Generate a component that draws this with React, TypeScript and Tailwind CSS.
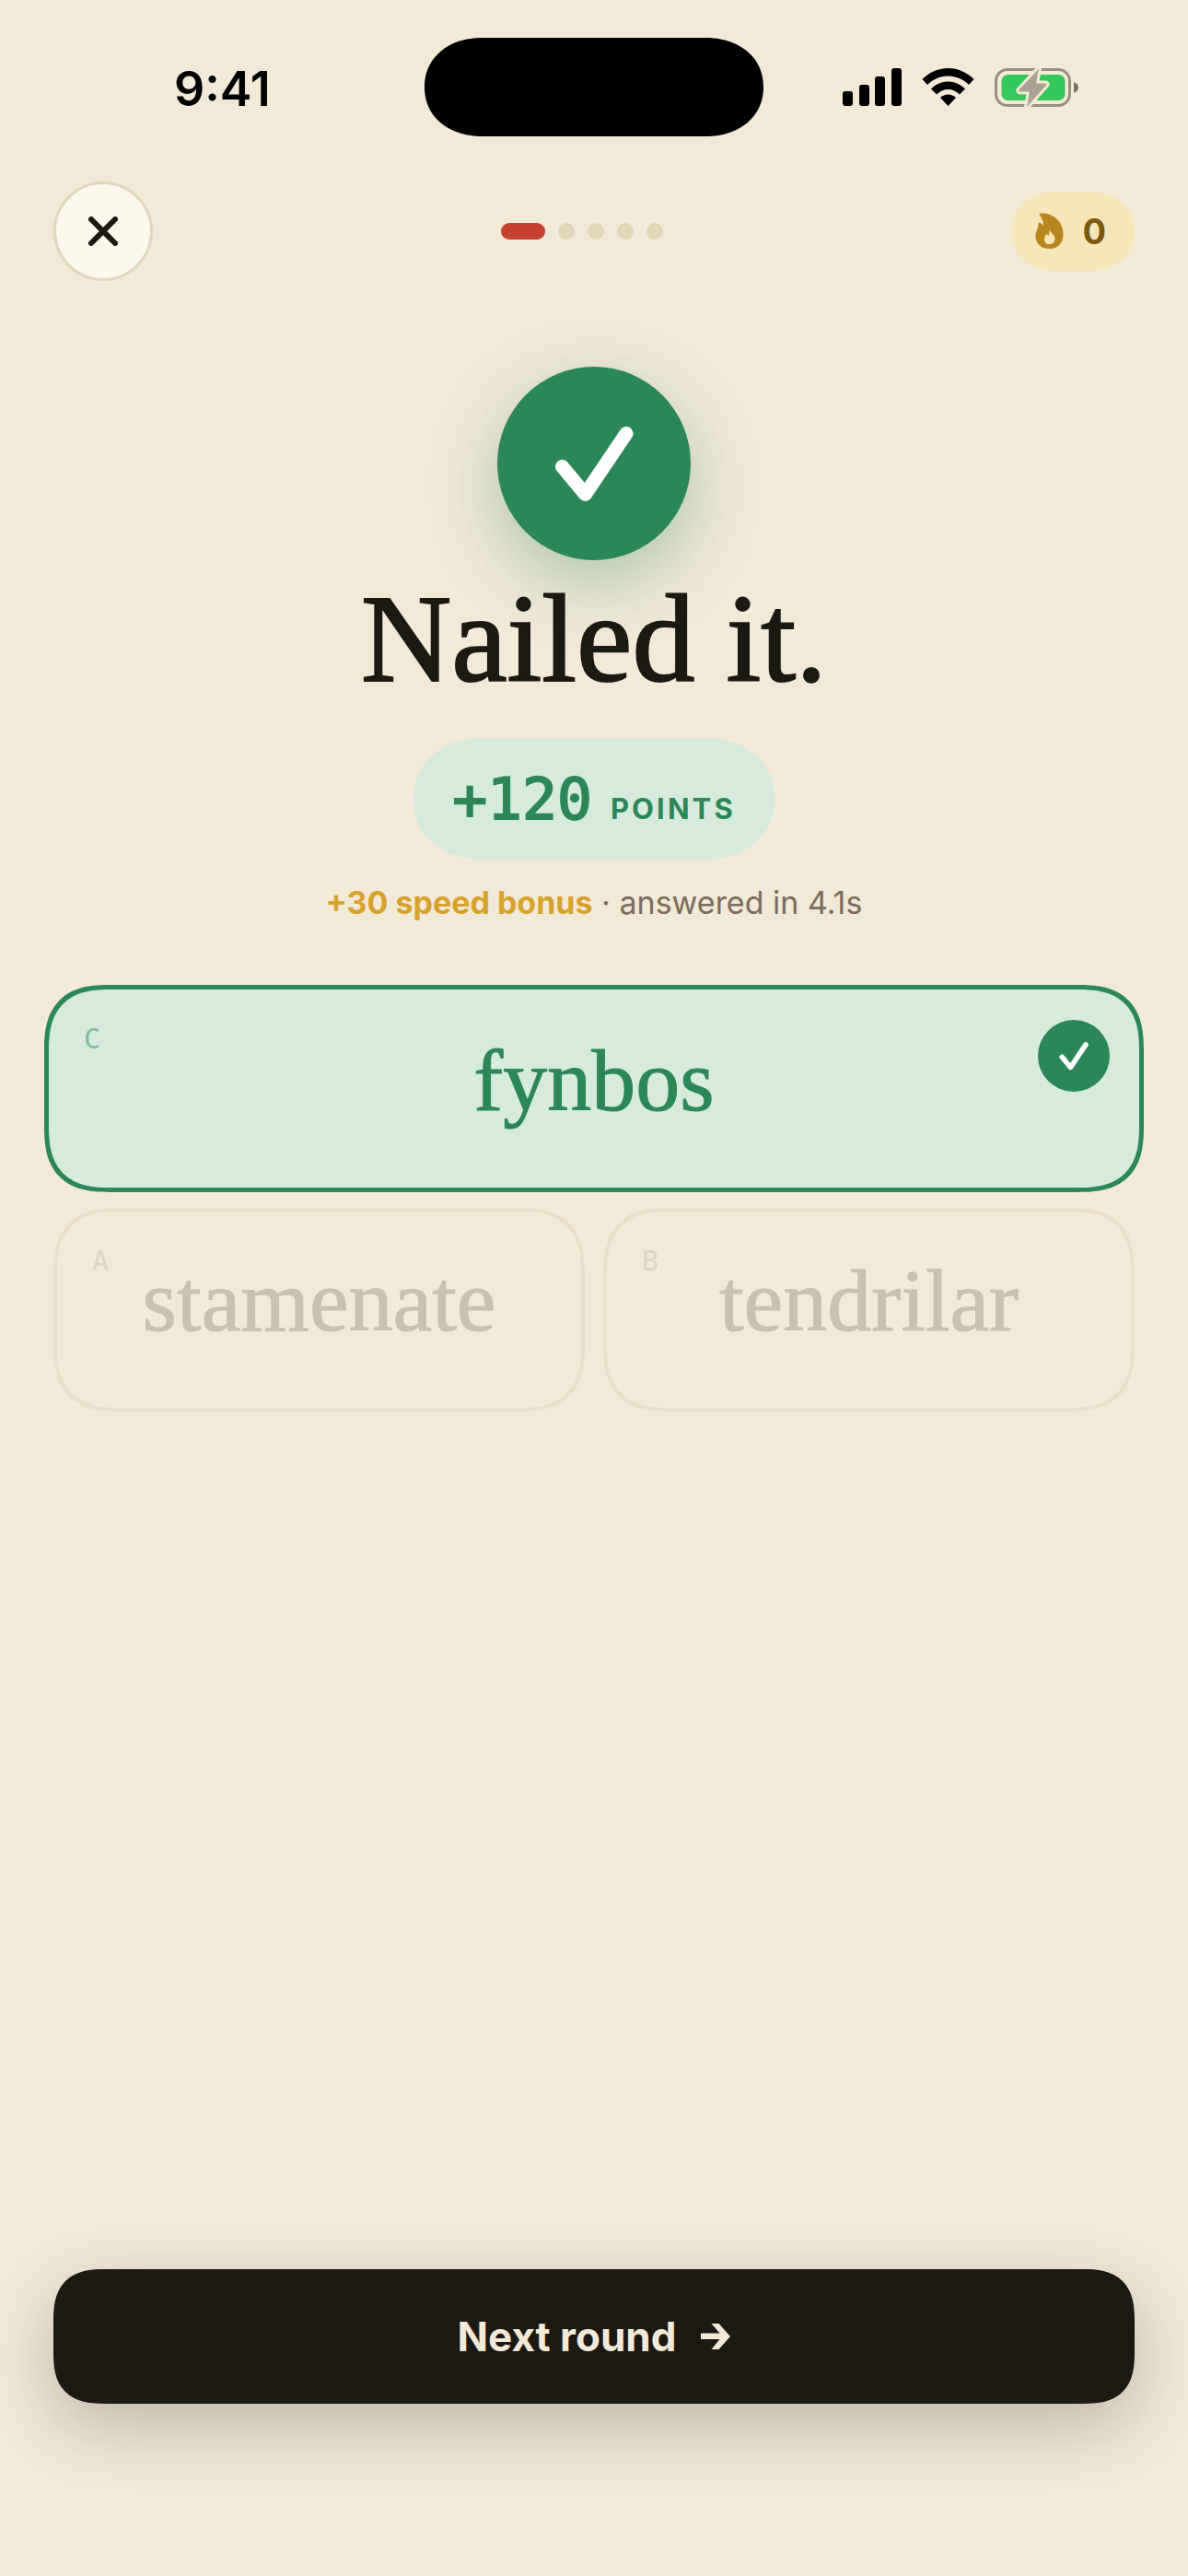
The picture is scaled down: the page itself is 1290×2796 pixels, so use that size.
type AnswerState = "correct" | "dimmed";

type Answer = {
  letter: string;
  word: string;
};

const otherAnswers: Answer[] = [
  { letter: "A", word: "stamenate" },
  { letter: "B", word: "tendrilar" },
];

const TOTAL_ROUNDS = 5;
const CURRENT_ROUND = 0;

function StatusBar() {
  return (
    <div className="grid grid-cols-[1fr_368px_1fr] items-center pt-[41px]">
      <div className="pt-1 pl-[189px] text-[52px] leading-[60px] font-semibold text-black">9:41</div>
      <div className="h-[107px] rounded-[64px/54px] bg-black [corner-shape:superellipse(1.1)]" />
      <div className="flex items-center justify-end gap-[22px] pr-[118px]">
        {/* Signal */}
        <svg width="64" height="42" viewBox="0 0 64 42" aria-hidden="true">
          <rect x="0" y="25" width="11" height="16" rx="3" />
          <rect x="18" y="18" width="11" height="23" rx="3" />
          <rect x="35" y="9" width="11" height="32" rx="3" />
          <rect x="53" y="0" width="11" height="41" rx="3" />
        </svg>
        {/* Wifi */}
        <svg width="57" height="42" viewBox="0 0 57 42" aria-hidden="true">
          <path d="M28.500 0C39 0 49 4.500 56.500 12L51 18C45 12 37 8.500 28.500 8.500S12 12 6 18L.5 12C8 4.500 18 0 28.500 0Z" />
          <path d="M28.500 14.500C35.500 14.500 42 17.500 47 22.500L41 28.500C37.500 25 33 23 28.500 23S19.500 25 16 28.500L10 22.500C15 17.500 21.500 14.500 28.500 14.500Z" />
          <path d="M28.500 28.500C31.500 28.500 34.500 29.700 37 32L28.500 41L20 32C22.500 29.700 25.500 28.500 28.500 28.500Z" />
        </svg>
        {/* Battery */}
        <svg width="92" height="44" viewBox="0 0 92 44" aria-hidden="true">
          <rect x="1.500" y="2.500" width="80" height="39" rx="12.500" fill="none" stroke="#979080" strokeWidth="3" />
          <path d="M86 16C89.500 17.500 91 19.500 91 22S89.500 26.500 86 28Z" fill="#797364" />
          <rect x="7.500" y="8" width="69" height="28" rx="7" fill="#34c759" />
          <path
            d="M48 1.500L26.500 24.500C26 25.500 26.500 26.500 27.500 26.500H38L35 43L56 19.500C57 18.500 56.500 17.500 55 17.500H45Z"
            fill="#aaa293"
            stroke="#f2e9d7"
            strokeWidth="6"
            strokeLinejoin="round"
            paintOrder="stroke"
          />
        </svg>
      </div>
    </div>
  );
}

function CheckIcon({ className }: { className: string }) {
  return (
    <svg className={className} viewBox="0 0 210 210" fill="none" aria-hidden="true">
      <path
        d="M70.500 108.500L95.500 138.500L140 72.500"
        stroke="white"
        strokeWidth="15"
        strokeLinecap="round"
        strokeLinejoin="round"
      />
    </svg>
  );
}

function TopBar() {
  return (
    <header className="flex items-center justify-between px-[58px] pt-[49px]">
      <button
        type="button"
        aria-label="Close"
        className="flex size-[108px] items-center justify-center rounded-full border-3 border-[#e2d6bb] bg-[#fbf7eb]"
      >
        <svg width="32" height="32" viewBox="0 0 32 32" fill="none" aria-hidden="true">
          <path d="M3 3L29 29M29 3L3 29" stroke="#1c1812" strokeWidth="6" strokeLinecap="round" />
        </svg>
      </button>

      {/* Round progress */}
      <div className="flex gap-[14px]">
        {Array.from({ length: TOTAL_ROUNDS }, (_, i) => (
          <span
            key={i}
            className={
              i === CURRENT_ROUND
                ? "h-[18px] w-12 rounded-full bg-[#c4412f]"
                : "size-[18px] rounded-full bg-[#e2d6bb]"
            }
          />
        ))}
      </div>

      {/* Streak */}
      <div className="flex h-[86px] items-center gap-[20px] rounded-[50px/43px] bg-[#f6e6b8] pr-[31px] pl-[26px] [corner-shape:superellipse(1.1)]">
        <svg width="31" height="40" viewBox="0 0 31 40" aria-hidden="true">
          <path
            d="M4.500 1C14-1.500 30.500 6 30.500 23C30.500 33 25 39 15.500 39S.5 33 .5 25.500C.5 19 4 17 3.500 10.500C6 10.500 7.500 12 8.500 14C10 8 6 6 4.500 1Z"
            fill="#b9861e"
          />
          <path
            d="M15.500 18C16 22 21.500 23 21.500 28.500C21.500 32 19 34 15.500 34S10 32 10 28.500C10 26 11.500 24 12.500 23L14.500 25C15.500 23 15 20 15.500 18Z"
            fill="#f6e6b8"
          />
        </svg>
        <span className="text-[38px] leading-none font-bold text-[#7a5a10]">0</span>
      </div>
    </header>
  );
}

function AnswerCard({ letter, word, state }: Answer & { state: AnswerState }) {
  const correct = state === "correct";
  return (
    <button
      type="button"
      className={
        correct
          ? "relative -mx-[10px] rounded-[72px] border-5 border-[#2c8757] bg-[#d6ebdc] pt-[51px] pb-[68px] text-[#2c8757] [corner-shape:superellipse(1.4)]"
          : "relative rounded-[72px] border-4 border-[#eadfc9] bg-[#f2e9d7] pt-[49px] pb-[68px] text-[#cac0ae] [corner-shape:superellipse(1.4)]"
      }
    >
      <span
        className={
          correct
            ? "absolute top-[36px] left-[38px] font-['DejaVu_Sans_Mono',monospace] text-[30px] leading-9 text-[#80bb9b]"
            : "absolute top-[36px] left-[38px] font-['DejaVu_Sans_Mono',monospace] text-[30px] leading-9 text-[#ded5c2]"
        }
      >
        {letter}
      </span>
      <span className="block font-['Liberation_Serif',serif] text-[96px] leading-[96px] [-webkit-text-stroke:1px]">
        {word}
      </span>
      {correct && (
        <span className="absolute top-[33px] right-[32px] size-[78px] rounded-full bg-[#2c8757]">
          <CheckIcon className="size-full" />
        </span>
      )}
    </button>
  );
}

export default function App() {
  return (
    <div className="flex min-h-screen flex-col bg-[#f2e9d7] font-[Inter,sans-serif]">
      <StatusBar />
      <TopBar />

      <main className="flex flex-1 flex-col px-[58px] pt-[93px]">
        {/* Result */}
        <section className="flex flex-col items-center">
          <div className="size-[210px] rounded-full bg-[#2c8757] shadow-[0_24px_72px_rgba(44,135,87,0.35)]">
            <CheckIcon className="size-full" />
          </div>
          <h1 className="mt-[17px] font-['Liberation_Serif',serif] text-[136px] leading-[136px] text-[#1c1812] [-webkit-text-stroke:2px]">
            Nailed it.
          </h1>
          <div className="mt-10 flex h-[132px] items-baseline gap-[20px] rounded-[76px/66px] bg-[#d6ebdc] px-[42px] pt-[31px] text-[#2c8757] [corner-shape:superellipse(1.1)]">
            <span className="font-['DejaVu_Sans_Mono',monospace] text-[63px] leading-[72px] [-webkit-text-stroke:2px]">
              +120
            </span>
            <span className="text-[31px] leading-9 font-bold tracking-widest">POINTS</span>
          </div>
          <p className="mt-[23px] text-[34px] leading-[48px] text-[#7d6c5b]">
            <strong className="font-bold text-[#d6a22c]">+30 speed bonus</strong> · answered in 4.1s
          </p>
        </section>

        {/* Answers */}
        <section className="mt-[65px] flex flex-col gap-[17px]">
          <AnswerCard letter="C" word="fynbos" state="correct" />
          <div className="grid grid-cols-2 gap-5">
            {otherAnswers.map((answer) => (
              <AnswerCard key={answer.letter} {...answer} state="dimmed" />
            ))}
          </div>
        </section>
      </main>

      <footer className="px-[58px] pb-[187px]">
        <button
          type="button"
          className="flex h-[146px] w-full items-center justify-center gap-[27px] rounded-[56px] bg-[#1c1812] text-[44px] font-bold text-[#f2e9d7] shadow-[0_24px_72px_rgba(28,24,18,0.24)] [corner-shape:superellipse(1.4)]"
        >
          Next round
          <svg width="32" height="28" viewBox="0 0 32 28" aria-hidden="true">
            <path d="M0 10.500H20.500L11.500 0H19.500L32 14L19.500 28H11.500L20.500 17H0Z" fill="currentColor" />
          </svg>
        </button>
      </footer>
    </div>
  );
}
